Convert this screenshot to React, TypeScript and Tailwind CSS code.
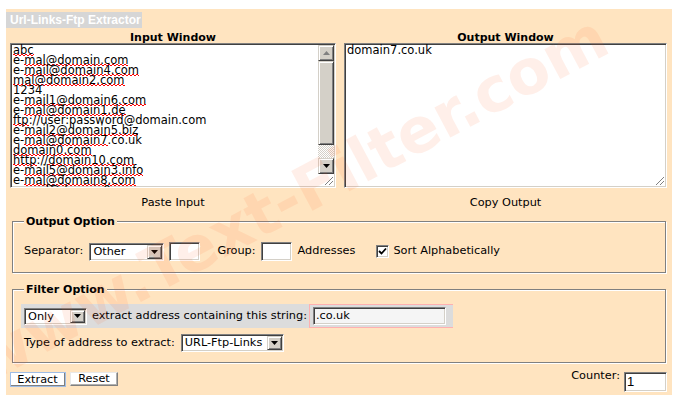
import React from "react";

const inset =
  "border border-t-[#808080] border-l-[#808080] border-b-white border-r-white shadow-[inset_1px_1px_0_#404040,inset_-1px_-1px_0_#d4d0c8]";
const outset =
  "border border-t-[#d4d0c8] border-l-[#d4d0c8] border-b-[#404040] border-r-[#404040] shadow-[inset_1px_1px_0_#ffffff,inset_-1px_-1px_0_#808080] bg-[#d4d0c8]";
const spell =
  "bg-no-repeat [background-image:repeating-linear-gradient(90deg,#ff0000_0_2px,transparent_2px_4px),repeating-linear-gradient(90deg,transparent_0_2px,#ff0000_2px_4px)] [background-size:100%_1px,100%_1px] [background-position:0_calc(100%-2px),0_calc(100%-1px)]";

function Arrow({ up, gray }: { up?: boolean; gray?: boolean }) {
  return (
    <svg width="7" height="4" viewBox="0 0 7 4">
      <path d={up ? "M3.5 0L7 4H0Z" : "M0 0H7L3.5 4Z"} fill={gray ? "#808080" : "#000"} />
    </svg>
  );
}

function Select({ cls, text }: { cls: string; text: string }) {
  return (
    <div className={"flex p-[1px] bg-white " + inset + " " + cls}>
      <div className="flex-1 pl-[2px] leading-[14px] overflow-hidden whitespace-nowrap">{text}</div>
      <div className={"w-[15px] flex items-center justify-center " + outset}>
        <Arrow />
      </div>
    </div>
  );
}

function Grip() {
  return (
    <svg width="11" height="11" viewBox="0 0 11 11">
      <path d="M10 2L2 10M10 6L6 10" stroke="#808080" strokeWidth="1" />
      <path d="M11 3L3 11M11 7L7 11" stroke="#ffffff" strokeWidth="1" />
    </svg>
  );
}

type Seg = [string, boolean];
const lines: Seg[][] = [
  [["abc", true]],
  [["e-", false], ["mal@domain.com", true]],
  [["e-", false], ["mail@domain4.com", true]],
  [["mal@domain2.com", true]],
  [["1234", false]],
  [["e-", false], ["mail1@domain6.com", true]],
  [["e-", false], ["mal@domain1.de", true]],
  [["ftp", true], ["://user:password@domain.com", false]],
  [["e-", false], ["mail2@domain5.biz", true]],
  [["e-", false], ["mal@domain7", true], [".co.uk", false]],
  [["domain0.com", true]],
  [["http", true], ["://", false], ["domain10.com", true]],
  [["e-", false], ["mail5@domain3.info", true]],
  [["e-", false], ["mal@domain8.com", true]],
  [["e-", false], ["mail@domain9.com", true]],
];

export default function App() {
  return (
    <div className="w-[679px] h-[404px] bg-white pt-[9px] pl-[6px] font-['DejaVu_Sans',sans-serif] text-[11.3px] text-black overflow-hidden">
      <div className="relative w-[666px] h-[386px] bg-[#ffe4c0] pt-[3px] overflow-hidden">
        {/* Title */}
        <div className="w-[136px] h-[16px] bg-[#d6d6d6] pl-[4px] text-white font-bold text-[12px] leading-[16px] font-['Liberation_Sans',Arial,sans-serif] whitespace-nowrap">
          Url-Links-Ftp Extractor
        </div>

        {/* Windows */}
        <div className="flex pl-[4px] gap-[8px]">
          <div className="w-[326px] flex flex-col">
            <div className="h-[15px] text-center font-bold text-[11px] leading-[20px]">Input Window</div>
            <div className={"h-[145px] flex bg-white " + inset}>
              <div className="flex-1 overflow-hidden pl-[2px] pt-[1px] text-[11.5px]">
                {lines.map((l, i) => (
                  <div key={i} className="leading-[10px] whitespace-pre">
                    {l.map((s, j) => (
                      <span key={j} className={s[1] ? spell : ""}>
                        {s[0]}
                      </span>
                    ))}
                  </div>
                ))}
              </div>
              <div className="w-[16px] mt-[1px] mr-[1px] mb-[1px] flex flex-col">
                <div className={"h-[16px] flex items-center justify-center " + outset}>
                  <Arrow up gray />
                </div>
                <div className={"h-[84px] " + outset}></div>
                <div className="h-[13px] [background-image:repeating-conic-gradient(#d4d0c8_0%_25%,#ffffff_0%_50%)] [background-size:2px_2px]"></div>
                <div className={"h-[16px] flex items-center justify-center " + outset}>
                  <Arrow />
                </div>
                <div className="flex-1 bg-white flex items-end justify-end">
                  <Grip />
                </div>
              </div>
            </div>
            <div className="h-[26px] pt-[4px] leading-[22px] text-center">Paste Input</div>
          </div>
          <div className="w-[323px] flex flex-col">
            <div className="h-[15px] text-center font-bold text-[11px] leading-[20px]">Output Window</div>
            <div className={"h-[145px] flex flex-col bg-white " + inset}>
              <div className="flex-1 overflow-hidden pl-[2px] pt-[1px] text-[11.5px]">
                <div className="leading-[10px] whitespace-pre">domain7.co.uk</div>
              </div>
              <div className="flex justify-end pr-[1px] pb-[1px]">
                <Grip />
              </div>
            </div>
            <div className="h-[26px] pt-[4px] leading-[22px] text-center">Copy Output</div>
          </div>
        </div>

        {/* Output Option */}
        <fieldset className="ml-[6px] mt-[1px] w-[654px] h-[58px] border border-[#808080] shadow-[inset_1px_1px_0_#ffffff,1px_1px_0_#ffffff] pl-[11px] pt-[14px]">
          <legend className="px-[2px] font-bold text-[11px] leading-[13px] bg-[#ffe4c0]">Output Option</legend>
          <div className="flex items-center h-[19px]">
            <span>Separator:</span>
            <Select cls="ml-[6px] w-[75px] h-[18px]" text="Other" />
            <div className={"ml-[5px] w-[31px] h-[19px] bg-white " + inset}></div>
            <span className="ml-[17px]">Group:</span>
            <div className={"ml-[5px] w-[31px] h-[19px] bg-white " + inset}></div>
            <span className="ml-[6px]">Addresses</span>
            <div className={"ml-[21px] w-[13px] h-[13px] bg-white flex items-center justify-center " + inset}>
              <svg width="9" height="9" viewBox="0 0 9 9">
                <path d="M1 4L3.5 6.5L8 1.5" stroke="#000" strokeWidth="1.8" fill="none" />
              </svg>
            </div>
            <span className="ml-[4px]">Sort Alphabetically</span>
          </div>
        </fieldset>

        {/* Filter Option */}
        <fieldset className="ml-[6px] mt-[10px] w-[654px] h-[80px] border border-[#808080] shadow-[inset_1px_1px_0_#ffffff,1px_1px_0_#ffffff] pl-[11px] pt-[8px]">
          <legend className="px-[2px] font-bold text-[11px] leading-[13px] bg-[#ffe4c0]">Filter Option</legend>
          <div className="ml-[-3px] w-[432px] h-[24px] bg-[#dcdcdc] pl-[3px] flex items-center">
            <Select cls="w-[63px] h-[17px]" text="Only" />
            <span className="ml-[5px] whitespace-nowrap">extract address containing this string:</span>
            <div className="ml-[2px] self-stretch flex items-center border-y border-l border-[#ffb0b0] pl-[3px] pr-[7px]">
              <div className={"w-[133px] h-[18px] bg-[#f5f5f5] pl-[2px] leading-[16px] " + inset}>.co.uk</div>
            </div>
          </div>
          <div className="mt-[6px] flex items-center h-[18px]">
            <span>Type of address to extract:</span>
            <Select cls="ml-[6px] w-[103px] h-[18px]" text="URL-Ftp-Links" />
          </div>
        </fieldset>

        {/* Bottom row */}
        <div className="mt-[7px] flex justify-between items-start pl-[4px] pr-[5px]">
          <div className="flex mt-[2px] gap-[4px]">
            <div className="border border-[#9fbde6] bg-white">
              <div className="w-[54px] h-[13px] border-r border-b border-[#808080] leading-[13px] text-center">Extract</div>
            </div>
            <div className="w-[48px] h-[14px] bg-white border border-t-[#e8e8e8] border-l-[#e8e8e8] border-r-[#808080] border-b-[#808080] shadow-[inset_-1px_-1px_0_#b0b0b0] leading-[12px] text-center">
              Reset
            </div>
          </div>
          <div className="flex items-start">
            <span className="leading-[12px]">Counter:</span>
            <div className={"ml-[4px] mt-[2px] w-[43px] h-[20px] bg-white pl-[2px] text-[13px] leading-[18px] font-['Liberation_Sans',Arial,sans-serif] " + inset}>
              1
            </div>
          </div>
        </div>

        {/* Watermark */}
        <div className="pointer-events-none absolute left-[284px] top-[190px] -translate-x-1/2 -translate-y-1/2 rotate-[-28deg] whitespace-nowrap font-bold text-[62px] leading-none text-[#ff64281a]">
          www.Text-Filter.com
        </div>
      </div>
    </div>
  );
}
